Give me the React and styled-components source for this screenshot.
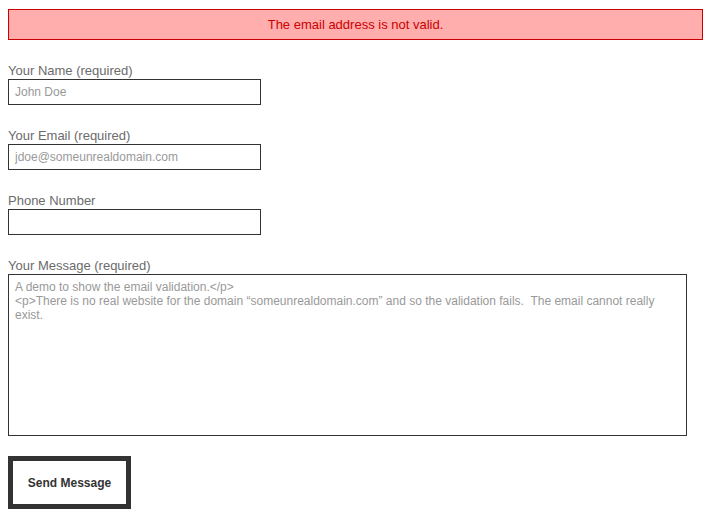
import React from 'react';
import styled, { createGlobalStyle } from 'styled-components';

const GlobalStyle = createGlobalStyle`
  body {
    margin: 8px;
    background: #fff;
    font-family: 'Liberation Sans', Arial, sans-serif;
  }
`;

const StyledForm = styled.form`
  padding-top: 1px;
  width: 695px;
`;

const StyledError = styled.div`
  border: 1px solid #c00;
  background: #ffadad;
  color: #c00;
  font-size: 13px;
  line-height: 16px;
  text-align: center;
  padding: 7px 0 6px;
  margin-bottom: 23px;
`;

const StyledField = styled.div`
  display: flex;
  flex-direction: column;
  align-items: flex-start;
  margin-bottom: ${(props) => (props.last ? 20 : 23)}px;
`;

const StyledLabel = styled.label`
  color: #6b6b6b;
  font-size: 13px;
  line-height: 15px;
  padding-bottom: 1px;
`;

const StyledInput = styled.input`
  box-sizing: border-box;
  width: 253px;
  height: 26px;
  margin: 0;
  padding: 0 6px;
  border: 1px solid #333;
  border-radius: 0;
  font-family: inherit;
  font-size: 12px;
  color: #333;
  outline: none;

  &::placeholder {
    color: #999;
    opacity: 1;
  }
`;

const StyledTextarea = styled.textarea`
  box-sizing: border-box;
  display: block;
  width: 679px;
  height: 162px;
  margin: 0;
  padding: 5px 6px 6px;
  border: 1px solid #333;
  border-radius: 0;
  font-family: inherit;
  font-size: 12px;
  line-height: 14px;
  resize: none;
  outline: none;

  &::placeholder {
    color: #999;
    opacity: 1;
  }
`;

const StyledButton = styled.button`
  box-sizing: border-box;
  display: flex;
  align-items: center;
  justify-content: center;
  width: 123px;
  height: 53px;
  margin: 0;
  padding: 1px 0 0;
  border: 5px solid #333;
  background: #fff;
  color: #333;
  font-family: inherit;
  font-size: 12px;
  font-weight: bold;
  cursor: pointer;
`;

const message =
  'A demo to show the email validation.</p>\n<p>There is no real website for the domain \u201csomeunrealdomain.com\u201d and so the validation fails.  The email cannot really exist.';

const App = () => (
  <React.Fragment>
    <GlobalStyle />
    <StyledForm onSubmit={(e) => e.preventDefault()}>
      <StyledError>The email address is not valid.</StyledError>

      <StyledField>
        <StyledLabel htmlFor="name">Your Name (required)</StyledLabel>
        <StyledInput id="name" placeholder="John Doe" />
      </StyledField>

      <StyledField>
        <StyledLabel htmlFor="email">Your Email (required)</StyledLabel>
        <StyledInput id="email" placeholder="jdoe@someunrealdomain.com" />
      </StyledField>

      <StyledField>
        <StyledLabel htmlFor="phone">Phone Number</StyledLabel>
        <StyledInput id="phone" />
      </StyledField>

      <StyledField last>
        <StyledLabel htmlFor="message">Your Message (required)</StyledLabel>
        <StyledTextarea id="message" placeholder={message} />
      </StyledField>

      <StyledButton type="submit">Send Message</StyledButton>
    </StyledForm>
  </React.Fragment>
);

export default App;
